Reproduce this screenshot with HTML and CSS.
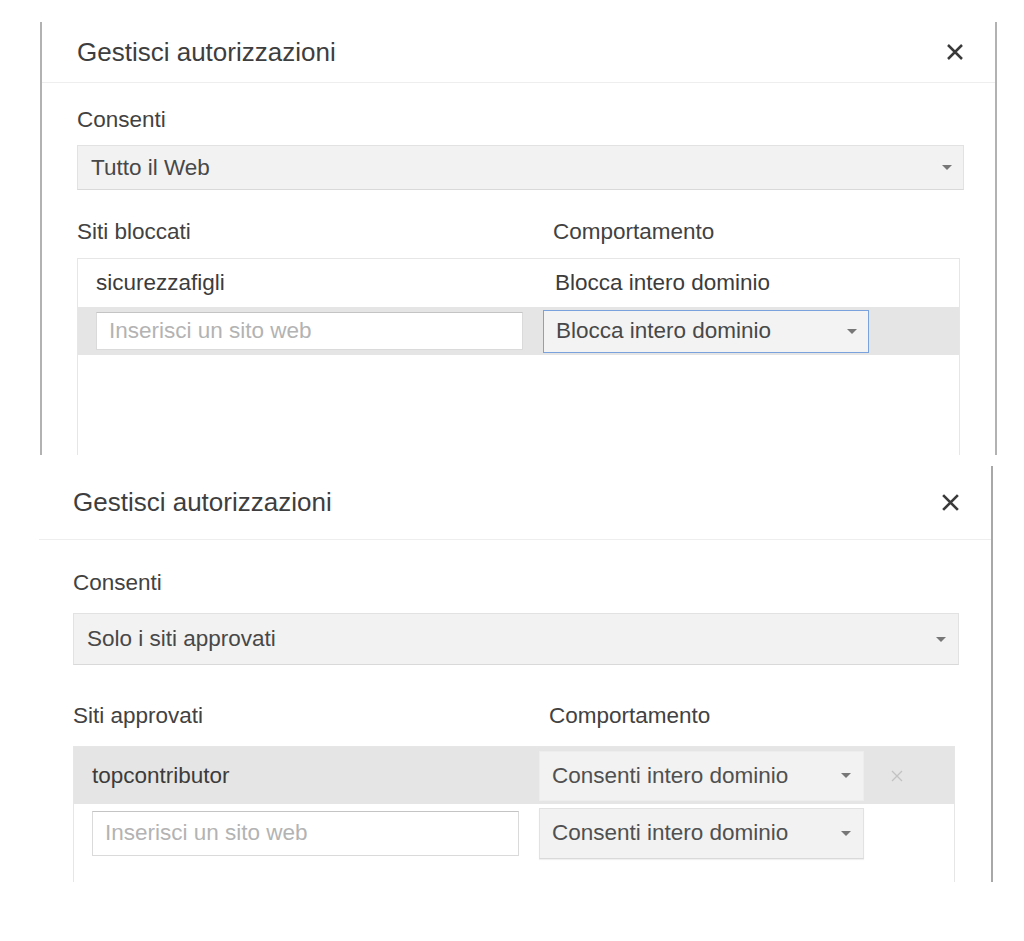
FILE: index.html
```html
<!DOCTYPE html>
<html lang="it">
<head>
<meta charset="utf-8">
<title>Gestisci autorizzazioni</title>
<link rel="stylesheet" href="styles.css">
</head>
<body>
<section class="shot shot-a">
  <header class="dlg-head">
    <span class="dlg-title">Gestisci autorizzazioni</span>
    <svg class="close" viewBox="0 0 18 18" width="18" height="18" aria-label="Chiudi"><path d="M2 2L16 16M16 2L2 16"/></svg>
  </header>
  <div class="dlg-body">
    <div class="label">Consenti</div>
    <div class="select wide"><span>Tutto il Web</span><i class="caret"></i></div>
    <div class="cols-head"><span class="ch1">Siti bloccati</span><span>Comportamento</span></div>
    <div class="table">
      <div class="row">
        <div class="cell">sicurezzafigli</div>
        <div class="cell c2">Blocca intero dominio</div>
      </div>
      <div class="row hl">
        <div class="input">Inserisci un sito web</div>
        <div class="select focus"><span>Blocca intero dominio</span><i class="caret"></i></div>
      </div>
    </div>
  </div>
</section>

<section class="shot shot-b">
  <header class="dlg-head">
    <span class="dlg-title">Gestisci autorizzazioni</span>
    <svg class="close" viewBox="0 0 18 18" width="19" height="19" aria-label="Chiudi"><path d="M2 2L16 16M16 2L2 16"/></svg>
  </header>
  <div class="dlg-body">
    <div class="label">Consenti</div>
    <div class="select wide"><span>Solo i siti approvati</span><i class="caret"></i></div>
    <div class="cols-head"><span class="ch1">Siti approvati</span><span>Comportamento</span></div>
    <div class="table">
      <div class="row hl">
        <div class="cell">topcontributor</div>
        <div class="select"><span>Consenti intero dominio</span><i class="caret"></i></div>
        <svg class="rm" viewBox="0 0 14 14" width="14" height="14" aria-label="Rimuovi"><path d="M2 2L12 12M12 2L2 12"/></svg>
      </div>
      <div class="row">
        <div class="input">Inserisci un sito web</div>
        <div class="select"><span>Consenti intero dominio</span><i class="caret"></i></div>
      </div>
    </div>
  </div>
</section>
</body>
</html>
```

FILE: styles.css
```css
* { box-sizing: border-box; }

html, body {
  margin: 0;
  padding: 0;
  background: #fff;
}

body {
  font-family: "Liberation Sans", Arial, sans-serif;
  font-size: 22.5px;
  color: #444;
  width: 1024px;
  height: 941px;
  overflow: hidden;
}

.shot {
  overflow: hidden;
  background: #fff;
}

.shot-a {
  margin: 22px 0 0 40px;
  width: 957px;
  height: 433px;
  border-left: 2px solid #b2b2b2;
  border-right: 2px solid #b2b2b2;
}

.shot-b {
  margin: 11px 0 0 39px;
  width: 954px;
  height: 416px;
  border-right: 2px solid #a8a8a8;
}

.dlg-head {
  display: flex;
  align-items: center;
  justify-content: space-between;
  border-bottom: 1px solid #eeeeee;
}

.shot-a .dlg-head { height: 61px; padding: 0 31px 0 35px; }
.shot-b .dlg-head { height: 74px; padding: 0 31px 0 34px; }

.dlg-title {
  font-size: 26px;
  color: #3e3e3e;
}

.close path {
  stroke: #3a3a3a;
  stroke-width: 2.5;
  fill: none;
}

.dlg-body { display: flex; flex-direction: column; }

.shot-a .dlg-body { padding: 24px 31px 0 35px; }
.shot-b .dlg-body { padding: 30px 32px 0 34px; }

.label, .cols-head {
  line-height: 26px;
  color: #424242;
}

.select {
  display: flex;
  align-items: center;
  justify-content: space-between;
  background: #f2f2f2;
  border: 1px solid #e2e2e2;
  border-bottom-color: #d9d9d9;
  padding: 0 11px 0 12px;
  color: #484848;
}

.caret {
  width: 0;
  height: 0;
  border-left: 5px solid transparent;
  border-right: 5px solid transparent;
  border-top: 5px solid #777;
}

.select.wide { height: 45px; margin-top: 12px; padding-left: 13px; }
.shot-b .select.wide { height: 52px; margin-top: 17px; padding-right: 12px; }

.cols-head { display: flex; }
.ch1 { width: 476px; }

.shot-a .cols-head { margin-top: 29px; }
.shot-b .cols-head { margin-top: 38px; }

.table {
  border: 1px solid #e6e6e6;
  margin-right: 4px;
  min-height: 400px;
}

.shot-a .table { margin-top: 13px; }
.shot-b .table { margin-top: 17px; }

.row {
  display: grid;
  grid-template-columns: 427px 326px auto;
  column-gap: 20px;
  align-items: center;
  padding-left: 18px;
}

.shot-a .row { height: 48px; }
.shot-b .row { grid-template-columns: 427px 325px auto; }
.shot-b .row:first-child { height: 57px; }
.shot-b .row:nth-child(2) { height: 58px; }

.row.hl { background: #e5e5e5; }

.cell { color: #3c3c3c; }
.cell.c2 { padding-left: 12px; }

.input {
  background: #fff;
  border: 1px solid #dadada;
  border-top-color: #c4c4c4;
  color: #b3b3b3;
  padding-left: 12px;
  display: flex;
  align-items: center;
}

.shot-a .input { height: 38px; }
.shot-a .row .select { height: 43px; }
.select.focus {
  border-color: #7aa2dc;
  background: #f3f3f3;
}

.shot-b .input { height: 45px; }
.shot-b .row .select {
  height: 51px;
  padding-right: 12px;
  color: #505050;
  box-shadow: 0 1px 1px rgba(0, 0, 0, 0.06);
}
.shot-b .row.hl .select { height: 50px; border-color: #ededed; box-shadow: none; }

.rm { margin-left: 6px; }
.rm path {
  stroke: #c2c2c2;
  stroke-width: 1.3;
  fill: none;
}
```
